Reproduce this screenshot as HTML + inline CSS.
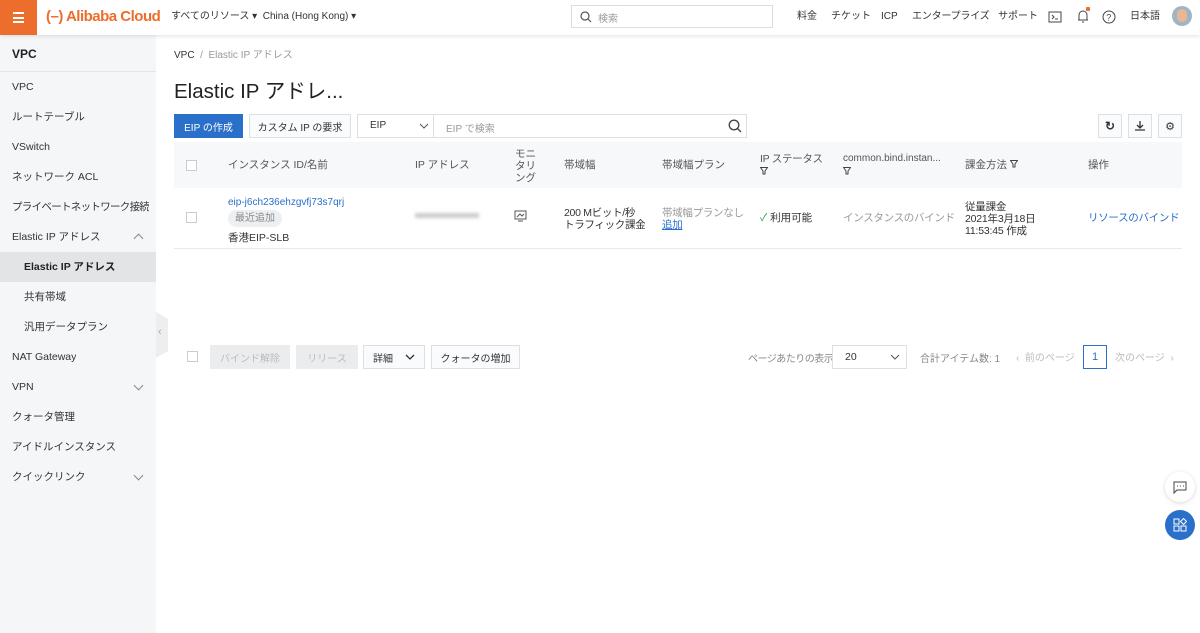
<!DOCTYPE html>
<html><head><meta charset="utf-8"><style>
*{box-sizing:border-box;margin:0;padding:0}
body{width:1200px;height:633px;overflow:hidden;background:#fff;font-family:"Liberation Sans","Noto Sans CJK JP",sans-serif;font-size:12px;color:#333;position:relative}
.abs{position:absolute;white-space:nowrap}
.hdr{position:absolute;left:0;top:0;width:1200px;height:35px;background:#fff;box-shadow:0 1px 4px rgba(0,0,0,.12);z-index:5}
.menu{position:absolute;left:0;top:0;width:37px;height:35px;background:#ed6e2c}
.menu i{position:absolute;left:13px;width:11px;height:2px;background:#fff}
.side{position:absolute;left:0;top:35px;width:156px;height:598px;background:#f5f6f7}
.si{position:absolute;left:12px;font-size:10.5px;color:#333;white-space:nowrap;overflow:hidden;max-width:138px;line-height:13px}
.chev{position:absolute;left:135px;width:7px;height:7px;border-right:1px solid #888;border-bottom:1px solid #888}
.btn{position:absolute;height:24px;border:1px solid #dcdfe3;background:#fafbfc;font-size:10px;display:flex;align-items:center;justify-content:center;color:#333;white-space:nowrap;overflow:hidden}
.th{position:absolute;font-size:10.5px;color:#555;line-height:12px;white-space:nowrap}
.td{position:absolute;font-size:10.5px;color:#333;line-height:12px;white-space:nowrap;overflow:hidden}
.cb{position:absolute;width:11px;height:11px;border:1px solid #ccc;background:#fff}
.link{color:#2a6fc9}
.filt{display:block;width:8px;height:8px;margin-top:2px}
.nv{position:absolute;top:10px;height:14px;line-height:14px;font-size:10px;color:#333;white-space:nowrap}
</style></head><body>
<div class="hdr">
 <div class="menu"><i style="top:12px"></i><i style="top:16.5px"></i><i style="top:21px"></i></div>
 <div class="abs" style="left:46px;top:8px;font-size:15px;color:#ed6e2c;font-weight:bold;letter-spacing:-0.5px">(–) Alibaba Cloud</div>
 <div class="nv" style="left:171px">すべてのリソース ▾ &nbsp;China (Hong Kong) ▾</div>
 <div class="abs" style="left:571px;top:5px;width:202px;height:23px;border:1px solid #ddd;background:#fff"><svg width="12" height="12" style="position:absolute;left:8px;top:5px"><circle cx="5" cy="5" r="4" fill="none" stroke="#555" stroke-width="1.2"/><path d="M8 8l3 3" stroke="#555" stroke-width="1.2"/></svg><span style="position:absolute;left:26px;top:4px;font-size:10px;color:#999">検索</span></div>
 <div class="nv" style="left:797px">料金</div>
 <div class="nv" style="left:831px">チケット</div>
 <div class="nv" style="left:881px">ICP</div>
 <div class="nv" style="left:912px;letter-spacing:-0.2px">エンタープライズ</div>
 <div class="nv" style="left:998px">サポート</div>
 <svg class="abs" style="left:1048px;top:11px" width="14" height="12"><rect x="1" y="1" width="12" height="10" fill="none" stroke="#444"/><path d="M4 4l2 2-2 2M7 8h3" stroke="#444" fill="none"/></svg>
 <svg class="abs" style="left:1076px;top:8px" width="14" height="16"><path d="M3 12V7a4 4 0 018 0v5zM2 12h10M6 14h2" stroke="#444" fill="none"/></svg>
 <div class="abs" style="left:1086px;top:7px;width:4px;height:4px;background:#ed6e2c;border-radius:1px"></div>
 <svg class="abs" style="left:1102px;top:10px" width="14" height="14"><circle cx="7" cy="7" r="6" stroke="#444" fill="none"/><text x="4.3" y="10.5" font-size="9" fill="#444" font-family="Liberation Sans">?</text></svg>
 <div class="nv" style="left:1130px">日本語</div>
 <div class="abs" style="left:1172px;top:6px;width:20px;height:20px;border-radius:50%;background:#9fb5c6"><div style="position:absolute;left:5px;top:3px;width:10px;height:13px;border-radius:5px;background:#e8b894"></div></div>
</div>
<div class="side">
 <div class="si" style="top:13px;font-size:12px;font-weight:bold;color:#222">VPC</div>
 <div class="abs" style="left:0;top:36px;width:156px;height:1px;background:#e3e5e8"></div>
 <div class="si" style="top:46px">VPC</div>
 <div class="si" style="top:76px">ルートテーブル</div>
 <div class="si" style="top:106px">VSwitch</div>
 <div class="si" style="top:136px">ネットワーク ACL</div>
 <div class="si" style="top:166px;letter-spacing:-0.7px">プライベートネットワーク接続</div>
 <div class="si" style="top:196px">Elastic IP アドレス</div><div class="chev" style="top:200px;transform:rotate(225deg)"></div>
 <div class="abs" style="left:0;top:217px;width:156px;height:30px;background:#e3e4e6"></div>
 <div class="si" style="top:226px;left:24px;font-weight:bold;color:#222">Elastic IP アドレス</div>
 <div class="si" style="top:256px;left:24px">共有帯域</div>
 <div class="si" style="top:286px;left:24px">汎用データプラン</div>
 <div class="si" style="top:316px">NAT Gateway</div>
 <div class="si" style="top:346px">VPN</div><div class="chev" style="top:347px;transform:rotate(45deg)"></div>
 <div class="si" style="top:376px">クォータ管理</div>
 <div class="si" style="top:406px">アイドルインスタンス</div>
 <div class="si" style="top:436px">クイックリンク</div><div class="chev" style="top:437px;transform:rotate(45deg)"></div>
</div>
<div class="abs" style="left:156px;top:312px;width:12px;height:46px;background:#eceeef;clip-path:polygon(0 0,100% 15%,100% 85%,0 100%)"><span style="position:absolute;left:2px;top:14px;font-size:11px;color:#aaa">‹</span></div>

<div class="abs" style="left:174px;top:46px;font-size:10px;color:#333">VPC <span style="color:#999">&nbsp;/&nbsp; Elastic IP アドレス</span></div>
<div class="abs" style="left:174px;top:74px;font-size:20.5px;color:#222">Elastic IP アドレ...</div>

<div class="btn" style="left:174px;top:114px;width:69px;background:#2a6fc9;border-color:#2a6fc9;color:#fff">EIP の作成</div>
<div class="btn" style="left:249px;top:114px;width:102px">カスタム IP の要求</div>
<div class="abs" style="left:357px;top:114px;width:390px;height:24px;border:1px solid #dcdfe3;background:#fff">
 <span style="position:absolute;left:12px;top:5px;font-size:10px">EIP</span>
 <svg style="position:absolute;left:61px;top:8px" width="10" height="7"><path d="M1 1l4 4 4-4" stroke="#555" fill="none"/></svg>
 <div style="position:absolute;left:75px;top:0;width:1px;height:22px;background:#dcdfe3"></div>
 <span style="position:absolute;left:88px;top:5px;font-size:10px;color:#999">EIP で検索</span>
 <svg style="position:absolute;left:370px;top:4px" width="14" height="14"><circle cx="6" cy="6" r="4.8" fill="none" stroke="#444" stroke-width="1.3"/><path d="M9.5 9.5l3.5 3.5" stroke="#444" stroke-width="1.3"/></svg>
</div>
<div class="btn" style="left:1098px;top:114px;width:24px;font-size:12px;font-weight:bold">↻</div>
<div class="btn" style="left:1128px;top:114px;width:24px"><svg width="12" height="12"><path d="M6 1v7M3 5l3 3 3-3M1 10h10" stroke="#333" fill="none" stroke-width="1.3"/></svg></div>
<div class="btn" style="left:1158px;top:114px;width:24px;font-size:11px">⚙</div>

<div class="abs" style="left:174px;top:142px;width:1008px;height:46px;background:#f7f8fa"></div>
<div class="cb" style="left:186px;top:160px"></div>
<div class="th" style="left:228px;top:159px">インスタンス ID/名前</div>
<div class="th" style="left:415px;top:159px">IP アドレス</div>
<div class="th" style="left:515px;top:148px">モニ<br>タリ<br>ング</div>
<div class="th" style="left:564px;top:159px">帯域幅</div>
<div class="th" style="left:662px;top:159px">帯域幅プラン</div>
<div class="th" style="left:760px;top:153px;letter-spacing:-0.3px">IP ステータス<svg class="filt" viewBox="0 0 8 8"><path d="M.5 .5h7L5 4v3H3V4z" fill="none" stroke="#444"/></svg></div>
<div class="th" style="left:843px;top:153px;font-size:10px">common.bind.instan...<svg class="filt" viewBox="0 0 8 8"><path d="M.5 .5h7L5 4v3H3V4z" fill="none" stroke="#444"/></svg></div>
<div class="th" style="left:965px;top:159px">課金方法 <svg width="8" height="8" viewBox="0 0 8 8"><path d="M.5 .5h7L5 4v3H3V4z" fill="none" stroke="#444"/></svg></div>
<div class="th" style="left:1088px;top:159px">操作</div>

<div class="cb" style="left:186px;top:212px"></div>
<div class="td link" style="left:228px;top:197px;font-size:10px">eip-j6ch236ehzgvfj73s7qrj</div>
<div class="abs" style="left:228px;top:210px;width:54px;height:17px;border-radius:9px;background:#edf0f3;color:#888;font-size:10px;line-height:17px;text-align:center">最近追加</div>
<div class="td" style="left:228px;top:232px">香港EIP-SLB</div>
<div class="abs" style="left:415px;top:213px;width:64px;height:5px;background:#ccc;filter:blur(1.5px)"></div>
<svg class="abs" style="left:514px;top:210px" width="13" height="12"><rect x="1" y="1" width="11" height="8" fill="none" stroke="#555"/><path d="M3 7l3-3 2 2 2-2M4 11h5" stroke="#555" fill="none"/></svg>
<div class="td" style="left:564px;top:207px;letter-spacing:-0.3px">200 Mビット/秒<br>トラフィック課金</div>
<div class="td" style="left:662px;top:207px;color:#999;width:94px;letter-spacing:-0.3px">帯域幅プランなし<br><span class="link" style="text-decoration:underline">追加</span></div>
<div class="td" style="left:760px;top:212px"><span style="color:#2fa34a">✓</span> 利用可能</div>
<div class="td" style="left:843px;top:212px;color:#999;width:112px;letter-spacing:-0.3px">インスタンスのバインドなし</div>
<div class="td" style="left:965px;top:201px;letter-spacing:-0.2px">従量課金<br>2021年3月18日<br>11:53:45 作成</div>
<div class="td link" style="left:1088px;top:212px;width:92px;letter-spacing:-0.3px">リソースのバインド <span style="color:#ddd">|</span></div>
<div class="abs" style="left:174px;top:248px;width:1008px;height:1px;background:#e8eaed"></div>

<div class="cb" style="left:187px;top:351px"></div>
<div class="btn" style="left:210px;top:345px;width:80px;background:#ebecee;border-color:#ebecee;color:#bbb">バインド解除</div>
<div class="btn" style="left:296px;top:345px;width:62px;background:#ebecee;border-color:#ebecee;color:#bbb">リリース</div>
<div class="btn" style="left:363px;top:345px;width:62px">詳細 <svg width="10" height="7" style="margin-left:12px"><path d="M1 1l4 4 4-4" stroke="#333" fill="none" stroke-width="1.3"/></svg></div>
<div class="btn" style="left:431px;top:345px;width:89px">クォータの増加</div>

<div class="abs" style="left:748px;top:350px;font-size:10px;color:#888;letter-spacing:-0.5px">ページあたりの表示</div>
<div class="abs" style="left:832px;top:345px;width:75px;height:24px;border:1px solid #dcdfe3;background:#fff"><span style="position:absolute;left:12px;top:5px;font-size:10.5px">20</span><svg style="position:absolute;left:57px;top:8px" width="10" height="7"><path d="M1 1l4 4 4-4" stroke="#555" fill="none"/></svg></div>
<div class="abs" style="left:920px;top:350px;font-size:10px;color:#888">合計アイテム数: 1</div>
<div class="abs" style="left:1016px;top:349px;font-size:10px;color:#bbb">‹ &nbsp;前のページ</div>
<div class="abs" style="left:1083px;top:345px;width:24px;height:24px;border:1px solid #2a6fc9;color:#2a6fc9;font-size:11px;line-height:22px;text-align:center">1</div>
<div class="abs" style="left:1115px;top:349px;font-size:10px;color:#bbb">次のページ &nbsp;›</div>

<div class="abs" style="left:1165px;top:472px;width:30px;height:30px;border-radius:50%;background:#fff;box-shadow:0 1px 5px rgba(0,0,0,.15)"><svg width="14" height="13" style="position:absolute;left:8px;top:9px"><path d="M1 1h12v8H4l-3 3z" fill="none" stroke="#444"/><path d="M4 5h1M7 5h1M10 5h1" stroke="#444"/></svg></div>
<div class="abs" style="left:1165px;top:510px;width:30px;height:30px;border-radius:50%;background:#2a6fc9"><svg width="14" height="14" style="position:absolute;left:8px;top:8px"><rect x="1" y="1" width="5" height="5" fill="none" stroke="#fff"/><rect x="1" y="8" width="5" height="5" fill="none" stroke="#fff"/><rect x="8" y="8" width="5" height="5" fill="none" stroke="#fff"/><path d="M10.5 .5l3 3-3 3-3-3z" fill="none" stroke="#fff"/></svg></div>
</body></html>
